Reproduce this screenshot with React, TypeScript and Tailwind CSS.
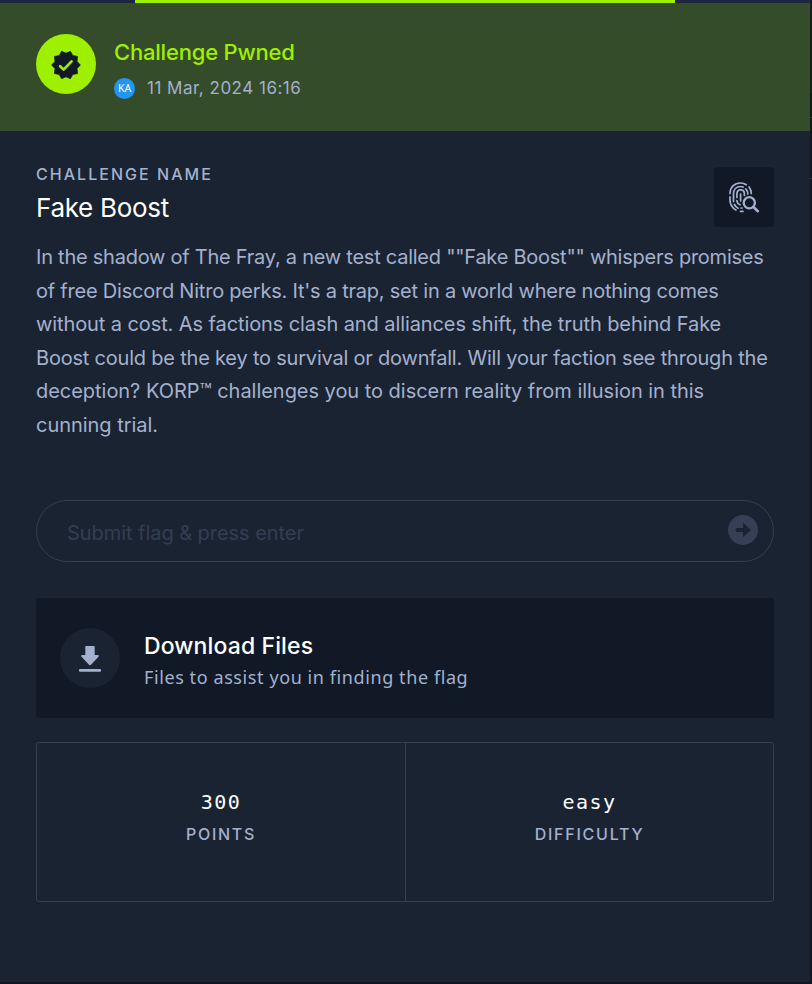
const inter = "font-['Inter','Liberation_Sans',sans-serif]";

const description = [
  { text: 'In the shadow of The Fray, a new test called ""Fake Boost"" whispers promises', cls: "tracking-[-0.245px]" },
  { text: "of free Discord Nitro perks. It's a trap, set in a world where nothing comes", cls: "tracking-[-0.22px]" },
  { text: "without a cost. As factions clash and alliances shift, the truth behind Fake", cls: "tracking-[-0.095px]" },
  { text: "Boost could be the key to survival or downfall. Will your faction see through the", cls: "tracking-[-0.205px]" },
  { text: "deception? KORP™ challenges you to discern reality from illusion in this", cls: "tracking-[-0.035px]" },
  { text: "cunning trial.", cls: "tracking-[-0.03px]" },
];

function BadgeIcon() {
  return (
    <svg width="32" height="32" viewBox="0 0 24 24" className="mt-[2px]">
      <path
        fill="#111927"
        stroke="#111927"
        strokeWidth="0.5"
        strokeLinejoin="round"
        d="M22.8 12l-2.5-2.7.4-3.7-3.6-.8-1.8-3.1L12 3.1 8.7 1.7 6.9 4.8l-3.6.8.4 3.7L1.2 12l2.5 2.7-.4 3.7 3.6.8 1.8 3.1 3.3-1.4 3.3 1.4 1.8-3.1 3.6-.8-.4-3.7z"
      />
      <path d="M7.6 12.900l2.600 2.600 6-6.200" fill="none" stroke="#9fef00" strokeWidth="2" strokeLinecap="round" strokeLinejoin="round" />
    </svg>
  );
}

function FingerprintSearchIcon() {
  return (
    <svg width="32" height="32" viewBox="0 0 32 32" fill="none" stroke="#a4b1cd" strokeWidth="1.7" strokeLinecap="round">
      <path d="M2 12.500C2 6 6.500 2 12.500 2c2.200 0 4.200.6 5.800 1.700M21.100 6c1.500 1.900 2.200 4 2.200 6.500M2 15.900v2.800c0 4.500 2.500 8.300 6 10.300M12.500 30.300h2.500" />
      <path d="M5.500 20.500V13c0-4.600 2.900-7.500 7-7.500 1 0 1.900.2 2.700.5M17.700 7.800c1.400 1.400 2.100 3.100 2.100 5.200M6.400 23.500c.8 1.600 2.100 2.900 3.700 3.700M13 27h1" />
      <path d="M8.900 16.500V13c0-2.600 1.500-4.200 3.700-4.200 2.300 0 3.800 1.600 3.800 4.200v1.500M8.900 19.500c.1 2.100 1.300 3.600 3.300 4.200" />
      <path d="M12.600 13v7" />
      <circle cx="21.300" cy="21.800" r="7.700" fill="#111927" stroke="none" />
      <circle cx="21.300" cy="21.800" r="5.600" strokeWidth="2.300" />
      <path d="M25.700 26.200l4.100 4" strokeWidth="2.600" />
    </svg>
  );
}

export default function App() {
  return (
    <div className={`flex h-[984px] w-[812px] flex-col overflow-hidden bg-[#111621] ${inter}`}>
      <div className="flex h-[982px]">
        <main className="flex w-[810px] flex-col bg-[#1a2332]">
          <div className="flex h-[3px] justify-center bg-[#1d2740]">
            <div className="w-[540px] bg-[#9fef00]" />
          </div>

          <header className="flex h-32 items-center bg-[#344c29] px-9 pb-[6px]">
            <div className="flex h-[60px] w-[60px] items-center justify-center rounded-full bg-[#9fef00]">
              <BadgeIcon />
            </div>
            <div className="ml-[18px] flex flex-col pt-[9px]">
              <h1 className="text-[22px] leading-[30px] font-medium tracking-[-0.2px] whitespace-nowrap text-[#9fef00]">Challenge Pwned</h1>
              <div className="mt-[10px] flex h-6 items-center">
                <span className="flex h-[21px] w-[21px] items-center justify-center rounded-full bg-[#2196f3] font-['Noto_Sans',sans-serif] text-[10.5px] text-white">KA</span>
                <span className="-mt-[2px] ml-3 text-[17px] leading-6 tracking-[0.5px] whitespace-nowrap text-[#a4b1cd]">11 Mar, 2024 16:16</span>
              </div>
            </div>
          </header>

          <section className="px-9 pt-9">
            <div className="flex h-[60px] justify-between">
              <div>
                <div className="-mt-[5px] text-[16px] leading-6 font-medium tracking-[2.03px] whitespace-nowrap text-[#a4b1cd]">CHALLENGE NAME</div>
                <h2 className="mt-[5px] text-[26px] leading-[34px] tracking-[-0.3px] whitespace-nowrap text-white">Fake Boost</h2>
              </div>
              <div className="flex h-[60px] w-[60px] items-center justify-center rounded-[3px] bg-[#111927]">
                <FingerprintSearchIcon />
              </div>
            </div>

            <p className="mt-[14px] text-[20px] leading-[33.500px] text-[#a4b1cd]">
              {description.map((line) => (
                <span key={line.text} className={`block whitespace-nowrap ${line.cls}`}>{line.text}</span>
              ))}
            </p>

            <div className="mt-[58px] flex h-[62px] items-center justify-between rounded-full border border-[#343f52] pr-[15px] pl-[30px]">
              <span className="pt-1 text-[20px] leading-7 tracking-[-0.05px] whitespace-nowrap text-[#343e53]">Submit flag &amp; press enter</span>
              <svg width="30" height="30" viewBox="0 0 30 30" className="mb-[2px]">
                <circle cx="15" cy="15" r="15" fill="#363f54" />
                <path d="M9.300 15H17" stroke="#1a2332" strokeWidth="3.800" strokeLinecap="round" />
                <path d="M15.300 8.300v13.400l7.200-6.700z" fill="#1a2332" stroke="#1a2332" strokeWidth="0.600" strokeLinejoin="round" />
              </svg>
            </div>

            <div className="mt-9 flex h-[120px] items-center rounded-[3px] bg-[#111927] px-6">
              <div className="flex h-[60px] w-[60px] items-center justify-center rounded-full bg-[#1a2332]">
                <svg width="24" height="28" viewBox="0 0 24 28" fill="#a4b1cd">
                  <path d="M8.300 2h7.400c.6 0 1 .4 1 1v8h3c1.100 0 1.500 1 .8 1.800l-7.500 7.900c-.6.600-1.400.6-2 0l-7.500-7.900C2.800 12 3.200 11 4.300 11h3V3c0-.6.400-1 1-1z" />
                  <rect x="1" y="25" width="22" height="2.700" rx="1" />
                </svg>
              </div>
              <div className="ml-6 pt-[5px]">
                <h3 className="text-[23px] leading-[30px] font-medium tracking-[0.13px] whitespace-nowrap text-white">Download Files</h3>
                <p className="mt-[3px] font-['Noto_Sans',sans-serif] text-[18px] leading-[26px] tracking-[0.59px] whitespace-nowrap text-[#a4b1cd]">Files to assist you in finding the flag</p>
              </div>
            </div>

            <div className="mt-6 flex h-40 rounded-[3px] border border-[#343f52] text-center">
              <div className="w-[369px] border-r border-[#343f52] pt-[46px]">
                <div className="font-['DejaVu_Sans_Mono',monospace] text-[20px] leading-[26px] tracking-[1.400px] text-white">300</div>
                <div className="mt-[7px] text-[16px] leading-6 font-medium tracking-[1.700px] text-[#a4b1cd]">POINTS</div>
              </div>
              <div className="w-[367px] pt-[46px]">
                <div className="font-['DejaVu_Sans_Mono',monospace] text-[20px] leading-[26px] tracking-[1.400px] text-white">easy</div>
                <div className="mt-[7px] text-[16px] leading-6 font-medium tracking-[1.750px] text-[#a4b1cd]">DIFFICULTY</div>
              </div>
            </div>
          </section>
        </main>
        <aside className="flex w-[2px] flex-col bg-[#111621]">
          <div className="h-[93px] bg-[#151c2b]" />
          <div className="h-6" />
          <div className="h-px bg-[#2a3242]" />
          <div className="h-[60px]" />
          <div className="h-px bg-[#2a3242]" />
        </aside>
      </div>
    </div>
  );
}
